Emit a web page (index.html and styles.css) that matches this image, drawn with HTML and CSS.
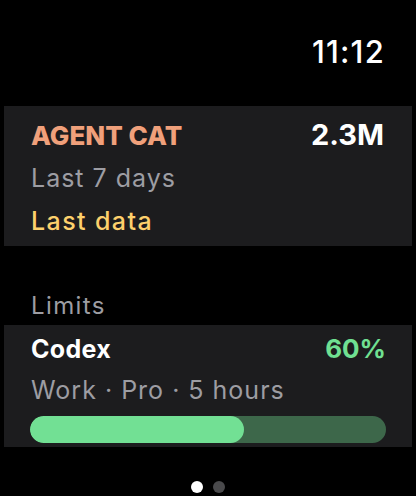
FILE: index.html
```html
<!DOCTYPE html>
<html lang="en">
<head>
    <meta charset="UTF-8">
    <meta name="viewport" content="width=device-width, initial-scale=1.0">
    <title>Usage</title>
    <link rel="stylesheet" href="styles.css">
</head>
<body>
    <div class="watch">
        <div class="status-bar">
            <span class="time">11:12</span>
        </div>

        <div class="card summary">
            <div class="row title-row">
                <span class="agent-name">AGENT CAT</span>
                <span class="total">2.3M</span>
            </div>
            <div class="row secondary">Last 7 days</div>
            <div class="row highlight">Last data</div>
        </div>

        <div class="section-label">Limits</div>

        <div class="card limit">
            <div class="row title-row">
                <span class="limit-name">Codex</span>
                <span class="limit-value">60%</span>
            </div>
            <div class="row secondary">Work · Pro · 5 hours</div>
            <div class="progress">
                <div class="progress-fill" style="width: 60%"></div>
            </div>
        </div>

        <div class="page-dots">
            <span class="dot active"></span>
            <span class="dot"></span>
        </div>
    </div>
</body>
</html>
```

FILE: styles.css
```css
body {
    margin: 0;
    padding: 0;
    background-color: #000;
    color: #fff;
    font-family: Inter, "Noto Sans", sans-serif;
}
.watch {
    width: 416px;
    height: 496px;
    display: flex;
    flex-direction: column;
    overflow: hidden;
}
.status-bar {
    display: flex;
    justify-content: flex-end;
    padding: 32px 32px 0 0;
}
.time {
    font-size: 31px;
    font-weight: 500;
    line-height: 40px;
    letter-spacing: 1.2px;
    margin-right: -1px;
}
.card {
    background-color: #1c1c1e;
    margin: 0 4px;
    padding: 0 28px 0 27px;
}
.row {
    display: flex;
    justify-content: space-between;
    align-items: baseline;
}
.summary {
    margin-top: 34px;
    padding-top: 7px;
    padding-bottom: 3px;
}
.summary .title-row {
    height: 44px;
    line-height: 43px;
}
.summary .secondary,
.summary .highlight {
    font-size: 25px;
    line-height: 43px;
    letter-spacing: 1px;
}
.summary .highlight {
    font-weight: 500;
    letter-spacing: 1.4px;
}
.agent-name {
    font-size: 26px;
    font-weight: 800;
    color: #f0a07b;
}
.total {
    font-size: 29px;
    font-weight: 700;
}
.secondary {
    color: #9d9da3;
}
.highlight {
    color: #fdd06c;
}
.section-label {
    margin-top: 45px;
    padding-left: 31px;
    font-size: 24px;
    line-height: 30px;
    letter-spacing: 1.4px;
    color: #9d9da3;
}
.limit {
    margin-top: 4px;
    padding-top: 3px;
    padding-bottom: 4px;
}
.limit .title-row,
.limit .secondary {
    font-size: 25px;
    line-height: 41px;
}
.limit .secondary {
    letter-spacing: 1px;
}
.limit-name {
    font-weight: 700;
    letter-spacing: 0.3px;
}
.limit-value {
    font-size: 26px;
    font-weight: 700;
    color: #70e092;
    margin-right: -2px;
}
.progress {
    margin: 5px -2px 0 -1px;
    height: 27px;
    border-radius: 14px;
    background-color: #3d674a;
    overflow: hidden;
}
.progress-fill {
    height: 100%;
    border-radius: 14px;
    background-color: #72e094;
}
.page-dots {
    display: flex;
    justify-content: center;
    gap: 10px;
    margin-top: 34px;
}
.dot {
    width: 12px;
    height: 12px;
    border-radius: 50%;
    background-color: #4a4a4c;
}
.dot.active {
    background-color: #fff;
}
```
